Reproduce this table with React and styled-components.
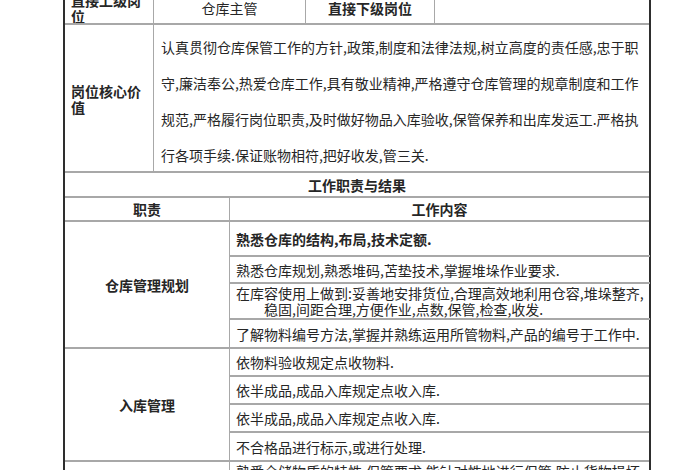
import React from 'react';
import styled, { createGlobalStyle } from 'styled-components';

const GlobalStyle = createGlobalStyle`
  html, body {
    margin: 0;
    padding: 0;
    background: #fff;
    overflow: hidden;
  }
  body {
    font-family: "Noto Sans CJK SC", "Noto Sans", sans-serif;
    color: #262626;
  }
`;

const Page = styled.div`
  width: 700px;
  height: 470px;
  overflow: hidden;
`;

const Sheet = styled.div`
  box-sizing: border-box;
  width: 588px;
  margin: -7px 0 0 63px;
  border-left: 2px solid #2e2e2e;
  border-right: 2px solid #2e2e2e;
  font-size: 14px;
`;

const Row = styled.div`
  box-sizing: border-box;
  display: grid;
  grid-template-columns: ${(p) => p.$cols || '1fr'};
  height: ${(p) => (p.$h ? `${p.$h}px` : 'auto')};
  border-bottom: 2px solid #a8a8a8;
`;

const Cell = styled.div`
  box-sizing: border-box;
  display: flex;
  align-items: center;
  justify-content: ${(p) => (p.$center ? 'center' : 'flex-start')};
  padding: 0 6px;
  font-weight: ${(p) => (p.$bold ? 700 : 400)};
  line-height: 16px;
  border-right: ${(p) => (p.$last ? 'none' : '1.5px solid #a8a8a8')};
  white-space: nowrap;
  overflow: hidden;
`;

const Label = styled(Cell)`
  white-space: normal;
  padding: 0 6px;
`;

const ValueText = styled.div`
  box-sizing: border-box;
  padding: 4px 0 0 7px;
  line-height: 36px;
  white-space: nowrap;
`;

const Group = styled.div`
  box-sizing: border-box;
  display: grid;
  grid-template-columns: 165px 1fr;
  border-bottom: 2px solid #a8a8a8;
`;

const Duty = styled.div`
  box-sizing: border-box;
  display: flex;
  align-items: center;
  justify-content: center;
  font-weight: 700;
  border-right: 1.5px solid #a8a8a8;
`;

const Items = styled.div`
  display: flex;
  flex-direction: column;
`;

const Item = styled.div`
  box-sizing: border-box;
  height: ${(p) => p.$h}px;
  display: flex;
  flex-direction: column;
  justify-content: ${(p) => (p.$top ? 'flex-start' : 'center')};
  padding: ${(p) => (p.$top ? '1px 6px 0' : '0 6px')};
  line-height: 16px;
  white-space: nowrap;
  overflow: hidden;
  font-weight: ${(p) => (p.$bold ? 700 : 400)};
  border-bottom: 2px solid #a8a8a8;
  &:last-child {
    border-bottom: none;
  }
`;

const Indent = styled.span`
  padding-left: 28px;
`;

const groups = [
  {
    duty: '仓库管理规划',
    items: [
      { h: 35, bold: true, lines: ['熟悉仓库的结构,布局,技术定额.'] },
      { h: 27, lines: ['熟悉仓库规划,熟悉堆码,苫垫技术,掌握堆垛作业要求.'] },
      {
        h: 36,
        lines: [
          '在库容使用上做到:妥善地安排货位,合理高效地利用仓容,堆垛整齐,',
          '稳固,间距合理,方便作业,点数,保管,检查,收发.',
        ],
      },
      { h: 27, lines: ['了解物料编号方法,掌握并熟练运用所管物料,产品的编号于工作中.'] },
    ],
  },
  {
    duty: '入库管理',
    items: [
      { h: 28, lines: ['依物料验收规定点收物料.'] },
      { h: 28, lines: ['依半成品,成品入库规定点收入库.'] },
      { h: 28, lines: ['依半成品,成品入库规定点收入库.'] },
      { h: 27, lines: ['不合格品进行标示,或进行处理.'] },
    ],
  },
  {
    duty: '',
    items: [
      { h: 30, top: true, lines: ['熟悉仓储物质的特性,保管要求,能针对性地进行保管,防止货物损坏'] },
    ],
  },
];

const coreLines = [
  '认真贯彻仓库保管工作的方针,政策,制度和法律法规,树立高度的责任感,忠于职',
  '守,廉洁奉公,热爱仓库工作,具有敬业精神,严格遵守仓库管理的规章制度和工作',
  '规范,严格履行岗位职责,及时做好物品入库验收,保管保养和出库发运工.严格执',
  '行各项手续.保证账物相符,把好收发,管三关.',
];

const App = () => (
  <Page>
    <GlobalStyle />
    <Sheet>
      <Row $cols="89px 152px 129px 1fr" $h={32}>
        <Label $bold>直接上级岗位</Label>
        <Cell $center>仓库主管</Cell>
        <Cell $center $bold>直接下级岗位</Cell>
        <Cell $last />
      </Row>
      <Row $cols="89px 1fr" $h={148}>
        <Label $bold>岗位核心价值</Label>
        <ValueText>
          {coreLines.map((l) => (
            <div key={l}>{l}</div>
          ))}
        </ValueText>
      </Row>
      <Row $h={25}>
        <Cell $center $bold $last>工作职责与结果</Cell>
      </Row>
      <Row $cols="165px 1fr" $h={24}>
        <Cell $center $bold>职责</Cell>
        <Cell $center $bold $last>工作内容</Cell>
      </Row>
      {groups.map((g, gi) => (
        <Group key={gi}>
          <Duty>{g.duty}</Duty>
          <Items>
            {g.items.map((it, i) => (
              <Item key={i} $h={it.h} $bold={it.bold} $top={it.top}>
                {it.lines.map((l, li) =>
                  li === 0 ? <span key={li}>{l}</span> : <Indent key={li}>{l}</Indent>
                )}
              </Item>
            ))}
          </Items>
        </Group>
      ))}
    </Sheet>
  </Page>
);

export default App;
